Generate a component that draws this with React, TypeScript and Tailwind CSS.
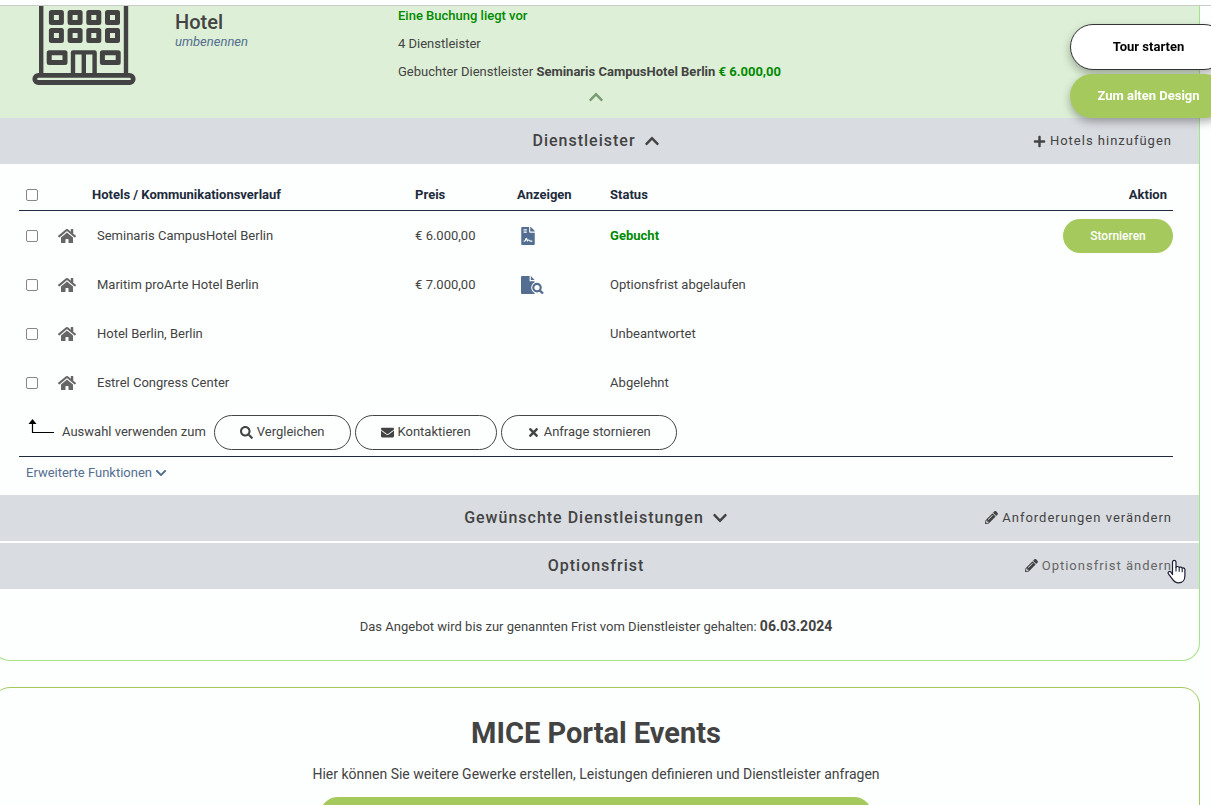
import React from "react";
import {
  FaChevronDown,
  FaChevronUp,
  FaEnvelope,
  FaFileContract,
  FaHome,
  FaPencilAlt,
  FaPlus,
  FaSearch,
  FaTimes,
} from "react-icons/fa";

type Provider = {
  name: string;
  price?: string;
  document?: "contract" | "offer";
  status: string;
  booked?: boolean;
};

const providers: Provider[] = [
  { name: "Seminaris CampusHotel Berlin", price: "€ 6.000,00", document: "contract", status: "Gebucht", booked: true },
  { name: "Maritim proArte Hotel Berlin", price: "€ 7.000,00", document: "offer", status: "Optionsfrist abgelaufen" },
  { name: "Hotel Berlin, Berlin", status: "Unbeantwortet" },
  { name: "Estrel Congress Center", status: "Abgelehnt" },
];

const checkboxClass =
  "block size-3 appearance-none rounded-[2px] border border-[#85858d] bg-white checked:bg-[#546e91]";

function HotelIcon() {
  return (
    <svg width="104" height="80" viewBox="0 0 104 80" fill="none" stroke="#434343" strokeWidth="5" aria-hidden="true">
      <path d="M9.2 0v69M94 0v69" strokeWidth="4.4" />
      <rect x="2.8" y="69.3" width="98.4" height="7.2" rx="3.6" strokeWidth="4.8" />
      <g strokeLinejoin="round">
        {[19.4, 38.1, 56.8, 75.5].map((x) => (
          <g key={x}>
            <rect x={x} y="6.4" width="10" height="10" />
            <rect x={x} y="24.4" width="10" height="10" />
          </g>
        ))}
        <rect x="17.2" y="46.8" width="15.8" height="9.8" />
        <rect x="70.4" y="46.8" width="15.8" height="9.8" />
      </g>
      <path d="M41 69V46.4h21.6V69M51.8 46v23" strokeWidth="4.4" strokeLinejoin="round" />
    </svg>
  );
}

function OfferIcon() {
  return (
    <svg width="23" height="18" viewBox="0 0 23 18" aria-hidden="true">
      <path d="M1 0h7.6v5.2h5V18H1a1 1 0 0 1-1-1V1a1 1 0 0 1 1-1z" fill="#546e91" />
      <path d="M9.8 0 13.6 4.1H9.8z" fill="#546e91" />
      <circle cx="16" cy="11.6" r="5.8" fill="#fdfffe" />
      <circle cx="16" cy="11.6" r="3.7" fill="none" stroke="#546e91" strokeWidth="2.2" />
      <path d="m18.6 14.3 3.4 3.2" stroke="#546e91" strokeWidth="2.4" />
    </svg>
  );
}

function SelectionArrow() {
  return (
    <svg width="26" height="26" viewBox="0 0 26 26" aria-hidden="true">
      <path d="M4.5 4v9.5H26" fill="none" stroke="#000" strokeWidth="1.2" />
      <path d="M4.5 0 8.5 5h-8z" fill="#000" />
    </svg>
  );
}

function HandPointer() {
  return (
    <svg width="19" height="25" viewBox="0 0 19 25" aria-hidden="true">
      <path
        d="M5.5 15.5V2.8a1.8 1.8 0 0 1 3.5 0v5.4c.4-1 2.9-1 3.2.4.6-1 2.8-.6 3 .7.8-.7 2.7-.2 2.7 1.3v6.1c0 4.2-2.4 7.1-6.3 7.1-3 0-4.6-1.1-6-3.4L1.4 14.8c-1-1.8 1.2-3.3 2.6-1.6z"
        fill="#fff"
        stroke="#1d2033"
        strokeWidth="1.2"
        strokeLinejoin="round"
      />
      <path d="M9 8v4.5M12.2 8.8v4M15.2 9.8v3.4" stroke="#1d2033" strokeWidth="1.1" />
    </svg>
  );
}

function SectionBar({ title, icon, children }: { title: string; icon?: React.ReactNode; children: React.ReactNode }) {
  return (
    <div className="grid h-[46px] grid-cols-[1fr_auto_1fr] items-center bg-[#d9dce1] px-[27px]">
      <h2 className="col-start-2 text-base font-medium tracking-[1px]">
        {icon ? (
          <button type="button" className="flex items-center gap-2 tracking-[1px]">
            {title}
            {icon}
          </button>
        ) : (
          title
        )}
      </h2>
      <div className="justify-self-end">{children}</div>
    </div>
  );
}

function BarLink({ icon, children }: { icon: React.ReactNode; children: React.ReactNode }) {
  return (
    <a href="#" className="flex items-center gap-1 tracking-[1px]">
      {icon}
      {children}
    </a>
  );
}

function PillButton({ icon, children }: { icon: React.ReactNode; children: React.ReactNode }) {
  return (
    <button
      type="button"
      className="flex h-[35px] items-center gap-1 rounded-full border border-[#434343] bg-[#fdfffe] px-[25px]"
    >
      {icon}
      {children}
    </button>
  );
}

export default function App() {
  return (
    <div className="h-screen overflow-hidden bg-[#fdfffe] font-['Roboto',sans-serif] text-[13px] leading-5 text-[#434343]">
      <div className="h-[6px] border-b border-[#c8ccc8]" />

      <section className="-ml-2 mr-[11px] overflow-hidden rounded-b-[18px] border border-t-0 border-[#a6e388] pb-[23px]">
        <header className="relative flex h-28 bg-[#ddefd6]">
          <div className="w-[182px] shrink-0 pl-[39px]">
            <HotelIcon />
          </div>
          <div className="w-[223px] shrink-0 pt-1">
            <h1 className="text-xl leading-6 font-medium">Hotel</h1>
            <a href="#" className="block leading-4 text-[#546e91] italic">
              umbenennen
            </a>
          </div>
          <div className="flex flex-col gap-2">
            <p className="font-medium text-[#008a00]">Eine Buchung liegt vor</p>
            <p>4 Dienstleister</p>
            <p>
              Gebuchter Dienstleister <strong className="font-bold">Seminaris CampusHotel Berlin</strong>{" "}
              <strong className="font-bold text-[#008a00]">€ 6.000,00</strong>
            </p>
          </div>
          <button
            type="button"
            aria-label="Einklappen"
            className="absolute bottom-[13px] left-1/2 -translate-x-1/2 text-[#7a9a73]"
          >
            <FaChevronUp size={16} />
          </button>
        </header>

        <SectionBar title="Dienstleister" icon={<FaChevronUp size={16} />}>
          <BarLink icon={<FaPlus size={13} />}>Hotels hinzufügen</BarLink>
        </SectionBar>

        <div className="px-[26px]">
          <table className="w-full table-fixed border-b border-[#1e2b3c] text-left">
            <colgroup>
              <col className="w-[39px]" />
              <col className="w-[34px]" />
              <col className="w-[28%]" />
              <col className="w-[102px]" />
              <col className="w-[93px]" />
              <col />
              <col className="w-[120px]" />
            </colgroup>
            <thead className="text-[#1e2b3c]">
              <tr className="h-[46px] border-b border-[#1e2b3c]">
                <th className="pt-4 pl-[7px]">
                  <input type="checkbox" aria-label="Alle auswählen" className={checkboxClass} />
                </th>
                <th />
                <th className="pt-4 font-bold">Hotels / Kommunikationsverlauf</th>
                <th className="pt-4 font-bold">Preis</th>
                <th className="pt-4 font-bold">Anzeigen</th>
                <th className="pt-4 font-bold">Status</th>
                <th className="pt-4 pr-[6px] text-right font-bold">Aktion</th>
              </tr>
            </thead>
            <tbody>
              {providers.map((p) => (
                <tr key={p.name} className="h-[49px]">
                  <td className="pl-[7px]">
                    <input type="checkbox" aria-label={p.name} className={checkboxClass} />
                  </td>
                  <td>
                    <FaHome size={18} className="text-[#666]" />
                  </td>
                  <td className="pl-[5px]">{p.name}</td>
                  <td>{p.price}</td>
                  <td className="pl-1">
                    {p.document === "contract" && (
                      <a href="#" aria-label="Vertrag anzeigen" className="flex w-[14px] justify-center text-[#546e91]">
                        <FaFileContract size={18} className="shrink-0" />
                      </a>
                    )}
                    {p.document === "offer" && (
                      <a href="#" aria-label="Angebot anzeigen" className="block">
                        <OfferIcon />
                      </a>
                    )}
                  </td>
                  <td className={p.booked ? "font-bold text-[#008a00]" : ""}>{p.status}</td>
                  <td>
                    {p.booked && (
                      <button
                        type="button"
                        className="my-2 ml-auto block h-[34px] w-[110px] rounded-full bg-[#a5c95c] text-xs font-medium text-white"
                      >
                        Stornieren
                      </button>
                    )}
                  </td>
                </tr>
              ))}
            </tbody>
            <tfoot>
              <tr>
                <td colSpan={7} className="pt-[7px] pb-[6px]">
                  <div className="flex items-center gap-1 pl-[9px]">
                    <SelectionArrow />
                    <span className="px-1">Auswahl verwenden zum</span>
                    <PillButton icon={<FaSearch size={13} />}>Vergleichen</PillButton>
                    <PillButton icon={<FaEnvelope size={13} />}>Kontaktieren</PillButton>
                    <PillButton icon={<FaTimes size={13} />}>Anfrage stornieren</PillButton>
                  </div>
                </td>
              </tr>
            </tfoot>
          </table>
          <button type="button" className="mt-[6px] mb-3 ml-[7px] flex items-center gap-[3px] text-[#546e91]">
            Erweiterte Funktionen
            <FaChevronDown size={12} />
          </button>
        </div>

        <div className="flex flex-col gap-[2px]">
          <SectionBar title="Gewünschte Dienstleistungen" icon={<FaChevronDown size={16} />}>
            <BarLink icon={<FaPencilAlt size={13} />}>Anforderungen verändern</BarLink>
          </SectionBar>
          <div className="relative">
            <SectionBar title="Optionsfrist">
              <div className="text-[#666]">
                <BarLink icon={<FaPencilAlt size={13} className="text-[#434343]" />}>Optionsfrist ändern</BarLink>
              </div>
            </SectionBar>
            <span className="absolute top-4 right-[13px]">
              <HandPointer />
            </span>
          </div>
        </div>

        <p className="pt-[27px] text-center">
          Das Angebot wird bis zur genannten Frist vom Dienstleister gehalten:{" "}
          <strong className="text-sm font-bold">06.03.2024</strong>
        </p>
      </section>

      <section className="mt-[26px] -ml-2 mr-[11px] flex flex-col items-center rounded-[18px] border border-[#a5c95c] px-6 pt-[27px] pb-8">
        <h2 className="text-[29px] leading-9 font-bold">MICE Portal Events</h2>
        <p className="mt-[11px] text-sm leading-6">
          Hier können Sie weitere Gewerke erstellen, Leistungen definieren und Dienstleister anfragen
        </p>
        <button type="button" aria-label="Gewerk erstellen" className="mt-[11px] h-9 w-[552px] rounded-full bg-[#a5c95c]" />
      </section>

      <div className="fixed top-6 -right-4 flex w-[157px] flex-col gap-1 font-bold">
        <button
          type="button"
          className="h-[46px] rounded-full border border-[#333] bg-white text-black shadow-[0_4px_8px_rgba(0,0,0,0.3)]"
        >
          Tour starten
        </button>
        <button
          type="button"
          className="h-11 rounded-full bg-[#a5c95c] text-white shadow-[0_4px_8px_rgba(0,0,0,0.3)]"
        >
          Zum alten Design
        </button>
      </div>
    </div>
  );
}
